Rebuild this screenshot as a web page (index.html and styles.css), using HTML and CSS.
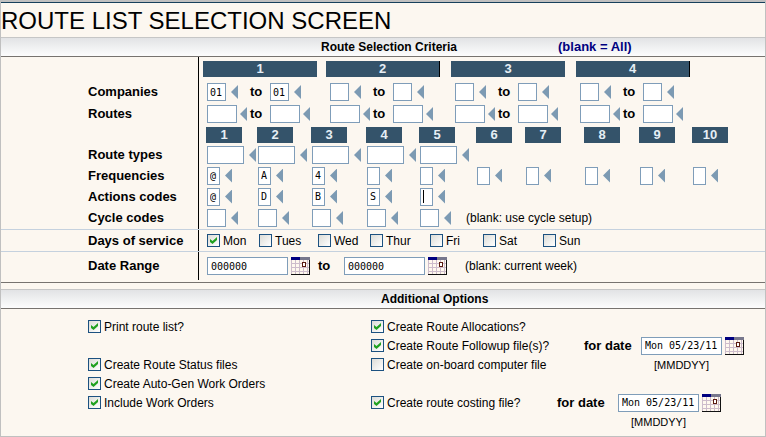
FILE: index.html
```html
<!DOCTYPE html>
<html lang="en">
<head>
  <meta charset="UTF-8">
  <meta name="viewport" content="width=device-width, initial-scale=1.0">
  <title>Route List Selection Screen</title>
  <link rel="stylesheet" href="styles.css">
</head>
<body>
  <svg width="0" height="0" class="defs" aria-hidden="true">
    <symbol id="calendar" viewBox="0 0 19 18">
      <rect width="19" height="18" fill="#fff8ee"/>
      <path d="M0.5 3v14M4.5 3v14M8.5 3v14M12.5 3v14M16.5 3v14M0 6.5h18M0 10.5h18M0 14.5h18" stroke="#cdbccb" fill="none"/>
      <rect width="9" height="3" fill="#000080"/>
      <rect x="9" width="10" height="3" fill="#77778c"/>
      <path d="M18.5 3v15M0 17.5h19" stroke="#111" fill="none"/>
      <rect x="11.5" y="5.5" width="3" height="4" fill="#fff" stroke="#5a1a10"/>
    </symbol>
  </svg>

  <form class="screen">
    <h1>ROUTE LIST SELECTION SCREEN</h1>

    <div class="section-bar criteria-bar">
      <h2>Route Selection Criteria</h2>
      <span class="blank-note">(blank = All)</span>
    </div>

    <div class="criteria">
      <div class="row heads">
        <div class="label"></div>
        <div class="cell groups">
          <span class="head">1</span>
          <span class="head edge">2</span>
          <span class="head">3</span>
          <span class="head edge">4</span>
        </div>
      </div>

      <div class="row">
        <div class="label">Companies</div>
        <div class="cell groups">
          <div class="range">
            <div class="field"><input class="w2" value="01" aria-label="Company 1 from"><button type="button" class="prompt" aria-label="Select"></button></div>
            <b>to</b>
            <div class="field"><input class="w2" value="01" aria-label="Company 1 to"><button type="button" class="prompt" aria-label="Select"></button></div>
          </div>
          <div class="range">
            <div class="field"><input class="w2" aria-label="Company 2 from"><button type="button" class="prompt" aria-label="Select"></button></div>
            <b>to</b>
            <div class="field"><input class="w2" aria-label="Company 2 to"><button type="button" class="prompt" aria-label="Select"></button></div>
          </div>
          <div class="range">
            <div class="field"><input class="w2" aria-label="Company 3 from"><button type="button" class="prompt" aria-label="Select"></button></div>
            <b>to</b>
            <div class="field"><input class="w2" aria-label="Company 3 to"><button type="button" class="prompt" aria-label="Select"></button></div>
          </div>
          <div class="range">
            <div class="field"><input class="w2" aria-label="Company 4 from"><button type="button" class="prompt" aria-label="Select"></button></div>
            <b>to</b>
            <div class="field"><input class="w2" aria-label="Company 4 to"><button type="button" class="prompt" aria-label="Select"></button></div>
          </div>
        </div>
      </div>

      <div class="row">
        <div class="label">Routes</div>
        <div class="cell groups">
          <div class="range">
            <div class="field tight"><input class="w3" aria-label="Route 1 from"><button type="button" class="prompt" aria-label="Select"></button></div>
            <b>to</b>
            <div class="field tight"><input class="w3" aria-label="Route 1 to"><button type="button" class="prompt" aria-label="Select"></button></div>
          </div>
          <div class="range">
            <div class="field tight"><input class="w3" aria-label="Route 2 from"><button type="button" class="prompt" aria-label="Select"></button></div>
            <b>to</b>
            <div class="field tight"><input class="w3" aria-label="Route 2 to"><button type="button" class="prompt" aria-label="Select"></button></div>
          </div>
          <div class="range">
            <div class="field tight"><input class="w3" aria-label="Route 3 from"><button type="button" class="prompt" aria-label="Select"></button></div>
            <b>to</b>
            <div class="field tight"><input class="w3" aria-label="Route 3 to"><button type="button" class="prompt" aria-label="Select"></button></div>
          </div>
          <div class="range">
            <div class="field tight"><input class="w3" aria-label="Route 4 from"><button type="button" class="prompt" aria-label="Select"></button></div>
            <b>to</b>
            <div class="field tight"><input class="w3" aria-label="Route 4 to"><button type="button" class="prompt" aria-label="Select"></button></div>
          </div>
        </div>
      </div>

      <div class="row short">
        <div class="label"></div>
        <div class="cell slots slot-heads">
          <span class="head">1</span>
          <span class="head">2</span>
          <span class="head">3</span>
          <span class="head">4</span>
          <span class="head">5</span>
          <span class="head">6</span>
          <span class="head">7</span>
          <span class="head">8</span>
          <span class="head">9</span>
          <span class="head">10</span>
        </div>
      </div>

      <div class="row short">
        <div class="label">Route types</div>
        <div class="cell slots">
          <div class="field"><input class="w4" aria-label="Route type 1"><button type="button" class="prompt" aria-label="Select"></button></div>
          <div class="field"><input class="w4" aria-label="Route type 2"><button type="button" class="prompt" aria-label="Select"></button></div>
          <div class="field"><input class="w4" aria-label="Route type 3"><button type="button" class="prompt" aria-label="Select"></button></div>
          <div class="field"><input class="w4" aria-label="Route type 4"><button type="button" class="prompt" aria-label="Select"></button></div>
          <div class="field"><input class="w4" aria-label="Route type 5"><button type="button" class="prompt" aria-label="Select"></button></div>
        </div>
      </div>

      <div class="row code">
        <div class="label">Frequencies</div>
        <div class="cell slots">
          <div class="field"><input class="w1" value="@" aria-label="Frequency 1"><button type="button" class="prompt" aria-label="Select"></button></div>
          <div class="field"><input class="w1" value="A" aria-label="Frequency 2"><button type="button" class="prompt" aria-label="Select"></button></div>
          <div class="field"><input class="w1" value="4" aria-label="Frequency 3"><button type="button" class="prompt" aria-label="Select"></button></div>
          <div class="field"><input class="w1" aria-label="Frequency 4"><button type="button" class="prompt" aria-label="Select"></button></div>
          <div class="field"><input class="w1" aria-label="Frequency 5"><button type="button" class="prompt" aria-label="Select"></button></div>
          <div class="field"><input class="w1" aria-label="Frequency 6"><button type="button" class="prompt" aria-label="Select"></button></div>
          <div class="field"><input class="w1" aria-label="Frequency 7"><button type="button" class="prompt" aria-label="Select"></button></div>
          <div class="field"><input class="w1" aria-label="Frequency 8"><button type="button" class="prompt" aria-label="Select"></button></div>
          <div class="field"><input class="w1" aria-label="Frequency 9"><button type="button" class="prompt" aria-label="Select"></button></div>
          <div class="field"><input class="w1" aria-label="Frequency 10"><button type="button" class="prompt" aria-label="Select"></button></div>
        </div>
      </div>

      <div class="row code">
        <div class="label">Actions codes</div>
        <div class="cell slots">
          <div class="field"><input class="w1" value="@" aria-label="Action code 1"><button type="button" class="prompt" aria-label="Select"></button></div>
          <div class="field"><input class="w1" value="D" aria-label="Action code 2"><button type="button" class="prompt" aria-label="Select"></button></div>
          <div class="field"><input class="w1" value="B" aria-label="Action code 3"><button type="button" class="prompt" aria-label="Select"></button></div>
          <div class="field"><input class="w1" value="S" aria-label="Action code 4"><button type="button" class="prompt" aria-label="Select"></button></div>
          <div class="field"><input class="w1 current" aria-label="Action code 5"><button type="button" class="prompt" aria-label="Select"></button></div>
        </div>
      </div>

      <div class="row">
        <div class="label">Cycle codes</div>
        <div class="cell slots">
          <div class="field"><input class="w2" aria-label="Cycle code 1"><button type="button" class="prompt" aria-label="Select"></button></div>
          <div class="field"><input class="w2" aria-label="Cycle code 2"><button type="button" class="prompt" aria-label="Select"></button></div>
          <div class="field"><input class="w2" aria-label="Cycle code 3"><button type="button" class="prompt" aria-label="Select"></button></div>
          <div class="field"><input class="w2" aria-label="Cycle code 4"><button type="button" class="prompt" aria-label="Select"></button></div>
          <div class="field"><input class="w2" aria-label="Cycle code 5"><button type="button" class="prompt" aria-label="Select"></button><span class="note">(blank: use cycle setup)</span></div>
        </div>
      </div>

      <div class="row ruled">
        <div class="label">Days of service</div>
        <div class="cell days">
          <label class="check"><input type="checkbox" checked>Mon</label>
          <label class="check"><input type="checkbox">Tues</label>
          <label class="check"><input type="checkbox">Wed</label>
          <label class="check"><input type="checkbox">Thur</label>
          <label class="check"><input type="checkbox">Fri</label>
          <label class="check"><input type="checkbox">Sat</label>
          <label class="check"><input type="checkbox">Sun</label>
        </div>
      </div>

      <div class="row ruled tall">
        <div class="label">Date Range</div>
        <div class="cell dates">
          <input class="date" value="000000" aria-label="Date from">
          <button type="button" class="cal" aria-label="Pick date"><svg><use href="#calendar"/></svg></button>
          <b>to</b>
          <input class="date" value="000000" aria-label="Date to">
          <button type="button" class="cal" aria-label="Pick date"><svg><use href="#calendar"/></svg></button>
          <span class="note">(blank: current week)</span>
        </div>
      </div>
    </div>

    <div class="section-bar options-bar">
      <h2>Additional Options</h2>
    </div>

    <div class="options">
      <div class="option-list">
        <label class="check"><input type="checkbox" checked>Print route list?</label>
        <label class="check after-gap"><input type="checkbox" checked>Create Route Status files</label>
        <label class="check"><input type="checkbox" checked>Create Auto-Gen Work Orders</label>
        <label class="check"><input type="checkbox" checked>Include Work Orders</label>
      </div>
      <div>
        <div class="option-grid followup">
          <label class="check wide"><input type="checkbox" checked>Create Route Allocations?</label>
          <label class="check"><input type="checkbox" checked>Create Route Followup file(s)?</label>
          <label for="followup-date"><b>for date</b></label>
          <input class="date" id="followup-date" value="Mon 05/23/11">
          <button type="button" class="cal" aria-label="Pick date"><svg><use href="#calendar"/></svg></button>
          <label class="check"><input type="checkbox">Create on-board computer file</label>
          <span class="format">[MMDDYY]</span>
        </div>
        <div class="option-grid costing">
          <label class="check"><input type="checkbox" checked>Create route costing file?</label>
          <label for="costing-date"><b>for date</b></label>
          <input class="date" id="costing-date" value="Mon 05/23/11">
          <button type="button" class="cal" aria-label="Pick date"><svg><use href="#calendar"/></svg></button>
          <span class="format">[MMDDYY]</span>
        </div>
      </div>
    </div>
  </form>
</body>
</html>
```
FILE: styles.css
```css
* {
  box-sizing: border-box;
}

body {
  margin: 0;
  background-color: #fcf7f0;
  color: #000;
  font-family: "Liberation Sans", Arial, sans-serif;
  font-size: 12px;
  line-height: 16px;
}

b {
  font-size: 13px;
}

.defs {
  position: absolute;
}

.screen {
  border: 1px solid #c0c0c0;
  border-top-width: 2px;
}

h1 {
  margin: 0;
  border-top: 1px solid #16405c;
  padding: 4px 0 2px;
  font-size: 24px;
  font-weight: normal;
  line-height: 28px;
}

/* Section bars */
.section-bar {
  height: 20px;
  border-top: 1px solid #c6c6c6;
  border-bottom: 1px solid #77736f;
  background: linear-gradient(#e2e3e5, #fdfdfd);
  display: flex;
  align-items: center;
}

.section-bar h2 {
  margin: 0;
  font-size: 12px;
}

.criteria-bar {
  padding-left: 320px;
  gap: 101px;
}

.blank-note {
  color: #000080;
  font-size: 13px;
  font-weight: bold;
}

.options-bar {
  margin-top: 6px;
  padding-left: 380px;
}

/* Criteria rows */
.criteria {
  border-bottom: 1px solid #77736f;
  padding-bottom: 2px;
}

.row {
  display: flex;
  height: 22px;
}

.row.heads {
  height: 24px;
}

.row.short {
  height: 20px;
}

.row.code {
  height: 21px;
}

.row.ruled {
  border-top: 1px solid #c5d1de;
}

.row.tall {
  height: 29px;
}

.label {
  width: 197px;
  padding-left: 87px;
  align-self: center;
  font-size: 13px;
  font-weight: bold;
}

.cell {
  flex: 1;
  border-left: 1px solid #000;
  align-items: center;
}

.head {
  height: 16px;
  background-color: #34536a;
  color: #e6eef5;
  font-size: 13px;
  font-weight: bold;
  text-align: center;
}

.groups {
  display: grid;
  grid-template-columns: 123px 125px 125px 114px;
  padding-left: 4px;
}

.groups .head {
  width: 114px;
}

.head.edge {
  border-right: 1px solid #000;
}

.range {
  display: grid;
  grid-template-columns: 43px 20px 43px;
  padding-left: 4px;
  align-items: center;
}

.slots {
  display: grid;
  grid-template-columns: 51px 54px 55px 53px 57px 49px 59px 55px 53px 37px;
  padding-left: 8px;
}

.slot-heads {
  padding-left: 7px;
}

.slot-heads .head {
  width: 36px;
}

.field {
  display: flex;
  align-items: center;
  gap: 5px;
}

.field.tight {
  gap: 3px;
}

input {
  height: 18px;
  margin: 0;
  border: 1px solid #7f9db9;
  padding: 0 3px;
  background-color: #fff;
  color: #000;
  font-family: "DejaVu Sans Mono", monospace;
  font-size: 10px;
}

.w1 {
  width: 13px;
  padding: 0 2px;
}

.w2 {
  width: 19px;
  padding: 0 2px;
}

.w3 {
  width: 30px;
}

.w4 {
  width: 37px;
}

.date {
  width: 81px;
}

/* text cursor */
.current {
  background: linear-gradient(#000, #000) 2px 1px / 1px 13px no-repeat #fff;
}

.prompt {
  flex: none;
  width: 7px;
  height: 14px;
  border: none;
  padding: 0;
  background-color: #7c9ab3;
  clip-path: polygon(0 50%, 100% 0, 100% 100%);
  cursor: pointer;
}

.note {
  margin-left: 10px;
  white-space: nowrap;
}

.days {
  display: grid;
  grid-template-columns: 52px 59px 52px 60px 53px 60px 60px;
  padding-left: 8px;
}

.dates {
  display: flex;
  padding-left: 8px;
}

.dates b {
  width: 26px;
}

.dates .cal {
  margin: 0 8px 0 3px;
}

.cal {
  width: 19px;
  height: 18px;
  border: none;
  padding: 0;
  background: none;
  cursor: pointer;
}

.cal svg {
  display: block;
  width: 19px;
  height: 18px;
}

.check {
  display: flex;
  align-items: center;
  gap: 3px;
  white-space: nowrap;
}

.check input {
  appearance: none;
  width: 13px;
  height: 13px;
  border: 1px solid #1c5180;
  padding: 0;
  background: linear-gradient(135deg, #dcdcd7, #fff);
}

.check input:checked::before {
  content: "";
  display: block;
  width: 7px;
  height: 7px;
  margin: 2px;
  background-color: #21a121;
  clip-path: polygon(0 29%, 0 71%, 36% 100%, 100% 43%, 100% 0, 36% 57%);
}

/* Additional options */
.options {
  display: grid;
  grid-template-columns: 283px 1fr;
  padding: 8px 0 5px 87px;
}

.option-list .check {
  height: 19px;
}

.option-list .after-gap {
  margin-top: 19px;
}

.option-grid {
  display: grid;
  grid-auto-rows: 19px;
  align-items: center;
}

.followup {
  grid-template-columns: 213px 57px 81px auto;
}

.costing {
  grid-template-columns: 186px 61px 81px auto;
  margin-top: 19px;
}

.wide {
  grid-column: 1 / -1;
}

.option-grid .cal {
  margin-left: 3px;
}

.format {
  grid-column: 3;
  font-size: 11px;
  text-align: center;
}
```
